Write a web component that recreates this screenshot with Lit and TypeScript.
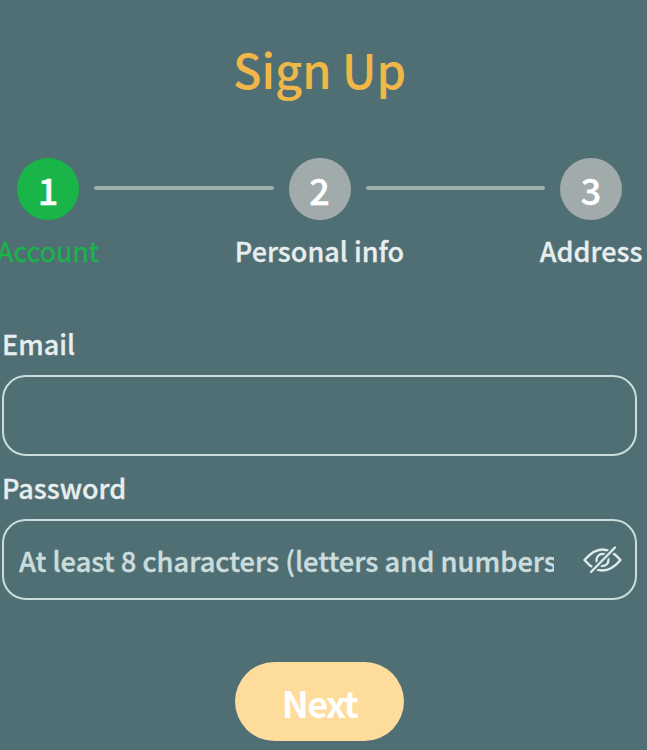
import { LitElement, html, css } from "lit";
import { customElement } from "lit/decorators.js";

const FONT = css`"Noto Sans CJK SC", "Noto Sans", sans-serif`;

@customElement("app-root")
export class AppRoot extends LitElement {
  static styles = css`
    :host {
      display: block;
      height: 750px;
      background: #4f6f75;
      font-family: ${FONT};
      overflow: hidden;
    }
    .page {
      width: 639px;
      box-sizing: border-box;
      display: flex;
      flex-direction: column;
      padding-top: 36px;
    }
    h1 {
      margin: 0;
      height: 66px;
      line-height: 66px;
      font-size: 47px;
      font-weight: 500;
      color: #efb748;
      text-align: center;
    }
    .stepper {
      display: flex;
      align-items: flex-start;
      gap: 15px;
      margin-top: 56px;
      padding: 0 17px;
    }
    .step {
      width: 62px;
      flex: none;
      display: flex;
      flex-direction: column;
      align-items: center;
    }
    .circle {
      width: 62px;
      height: 62px;
      border-radius: 50%;
      background: #a1abab;
      color: #fff;
      font-size: 36px;
      font-weight: 500;
      -webkit-text-stroke: 0.4px #fff;
      display: flex;
      align-items: center;
      justify-content: center;
    }
    .step.active .circle {
      background: #19b548;
    }
    .step-label {
      margin-top: 12px;
      font-size: 27px;
      line-height: 38px;
      font-weight: 500;
      color: #e8eeee;
      -webkit-text-stroke: 0.3px #e8eeee;
      white-space: nowrap;
    }
    .step.active .step-label {
      color: #19b548;
      font-weight: 400;
      -webkit-text-stroke: 0.3px #19b548;
    }
    .line {
      flex: 1;
      height: 4px;
      margin-top: 28px;
      border-radius: 2px;
      background: #9cb0ab;
    }
    .form {
      display: flex;
      flex-direction: column;
      padding: 0 2px;
      margin-top: 55px;
    }
    label {
      font-size: 27px;
      font-weight: 500;
      line-height: 38px;
      color: #e8eeee;
      -webkit-text-stroke: 0.3px #e8eeee;
      height: 38px;
      margin-bottom: 12px;
    }
    .field {
      height: 81px;
      flex: none;
      box-sizing: border-box;
      border: 2px solid #ccdcdc;
      border-radius: 24px;
      display: flex;
      align-items: center;
      padding: 0 13px 0 15px;
      margin-bottom: 13px;
    }
    .placeholder {
      width: 535px;
      flex: none;
      overflow: hidden;
      white-space: nowrap;
      font-size: 27.300px;
      font-weight: 500;
      color: #cbdcdc;
      -webkit-text-stroke: 0.4px #cbdcdc;
    }
    .eye {
      margin-left: auto;
      width: 40px;
      height: 32px;
      flex: none;
    }
    .actions {
      display: flex;
      justify-content: center;
      margin-top: 49px;
    }
    .next {
      width: 169px;
      height: 79px;
      border: none;
      border-radius: 40px;
      background: #fddc9c;
      color: #fff;
      font-family: inherit;
      font-size: 36px;
      font-weight: 700;
      letter-spacing: -1.500px;
      padding: 0;
    }
  `;

  render() {
    return html`
      <div class="page">
        <h1>Sign Up</h1>
        <div class="stepper">
          <div class="step active">
            <div class="circle">1</div>
            <div class="step-label">Account</div>
          </div>
          <div class="line"></div>
          <div class="step">
            <div class="circle">2</div>
            <div class="step-label">Personal info</div>
          </div>
          <div class="line"></div>
          <div class="step">
            <div class="circle">3</div>
            <div class="step-label">Address</div>
          </div>
        </div>
        <div class="form">
          <label>Email</label>
          <div class="field"></div>
          <label>Password</label>
          <div class="field">
            <div class="placeholder">At least 8 characters (letters and numbers)</div>
            <svg class="eye" viewBox="0 0 40 32" fill="none" stroke="#dfeaea" stroke-width="2.400" stroke-linecap="round" stroke-linejoin="round">
              <path d="M2.500 16 C8 9.500 14 5.500 20.500 5.500 C27 5.500 33 9.500 38.500 16 C33 22.500 27 26.500 20.500 26.500 C14 26.500 8 22.500 2.500 16 Z" />
              <circle cx="20.500" cy="16" r="6" />
              <path d="M9 28 L33 3.500" stroke="#4f6f75" stroke-width="5.500" />
              <path d="M9 28 L33 3.500" />
            </svg>
          </div>
        </div>
        <div class="actions"><button class="next">Next</button></div>
      </div>
    `;
  }
}
